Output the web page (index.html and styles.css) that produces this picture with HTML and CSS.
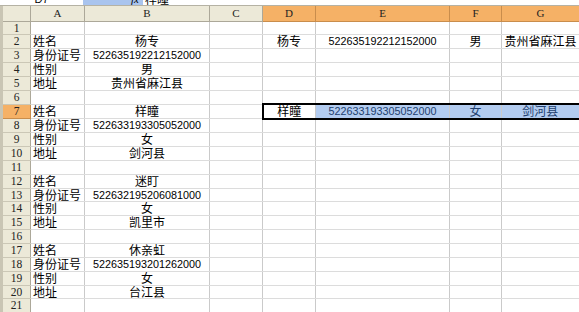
FILE: index.html
```html
<!DOCTYPE html>
<html lang="zh-CN">

<head>
  <meta charset="UTF-8" />
  <title>Sheet1</title>
  <link rel="stylesheet" href="styles.css">
</head>

<body>
  <div class="formula-bar">
    <div class="name-box"><span>D7</span></div>
    <div class="fx-box"><span>fx</span></div>
    <div class="formula-text"><span>样瞳</span></div>
  </div>

  <table class="sheet">
    <colgroup>
      <col class="w-head">
      <col class="w-a">
      <col class="w-b">
      <col class="w-c">
      <col class="w-d">
      <col class="w-e">
      <col class="w-f">
      <col class="w-g">
    </colgroup>
    <thead>
      <tr>
        <th class="corner"></th>
        <th>A</th>
        <th>B</th>
        <th>C</th>
        <th class="hl">D</th>
        <th class="hl">E</th>
        <th class="hl">F</th>
        <th class="hl">G</th>
      </tr>
    </thead>
    <tbody>
      <tr><th>1</th><td></td><td></td><td></td><td></td><td></td><td></td><td></td></tr>
      <tr><th>2</th><td class="l">姓名</td><td>杨专</td><td></td><td>杨专</td><td class="num">522635192212152000</td><td>男</td><td>贵州省麻江县</td></tr>
      <tr><th>3</th><td class="l">身份证号</td><td class="num">522635192212152000</td><td></td><td></td><td></td><td></td><td></td></tr>
      <tr><th>4</th><td class="l">性别</td><td>男</td><td></td><td></td><td></td><td></td><td></td></tr>
      <tr><th>5</th><td class="l">地址</td><td>贵州省麻江县</td><td></td><td></td><td></td><td></td><td></td></tr>
      <tr><th>6</th><td></td><td></td><td></td><td></td><td></td><td></td><td></td></tr>
      <tr><th class="hl">7</th><td class="l">姓名</td><td>样瞳</td><td></td><td class="sel sel-l">样瞳</td><td class="sel pick num">522633193305052000</td><td class="sel pick">女</td><td class="sel pick sel-r">剑河县</td></tr>
      <tr><th>8</th><td class="l">身份证号</td><td class="num">522633193305052000</td><td></td><td></td><td></td><td></td><td></td></tr>
      <tr><th>9</th><td class="l">性别</td><td>女</td><td></td><td></td><td></td><td></td><td></td></tr>
      <tr><th>10</th><td class="l">地址</td><td>剑河县</td><td></td><td></td><td></td><td></td><td></td></tr>
      <tr><th>11</th><td></td><td></td><td></td><td></td><td></td><td></td><td></td></tr>
      <tr><th>12</th><td class="l">姓名</td><td>迷盯</td><td></td><td></td><td></td><td></td><td></td></tr>
      <tr><th>13</th><td class="l">身份证号</td><td class="num">522632195206081000</td><td></td><td></td><td></td><td></td><td></td></tr>
      <tr><th>14</th><td class="l">性别</td><td>女</td><td></td><td></td><td></td><td></td><td></td></tr>
      <tr><th>15</th><td class="l">地址</td><td>凯里市</td><td></td><td></td><td></td><td></td><td></td></tr>
      <tr><th>16</th><td></td><td></td><td></td><td></td><td></td><td></td><td></td></tr>
      <tr><th>17</th><td class="l">姓名</td><td>休亲虹</td><td></td><td></td><td></td><td></td><td></td></tr>
      <tr><th>18</th><td class="l">身份证号</td><td class="num">522635193201262000</td><td></td><td></td><td></td><td></td><td></td></tr>
      <tr><th>19</th><td class="l">性别</td><td>女</td><td></td><td></td><td></td><td></td><td></td></tr>
      <tr><th>20</th><td class="l">地址</td><td>台江县</td><td></td><td></td><td></td><td></td><td></td></tr>
      <tr><th>21</th><td></td><td></td><td></td><td></td><td></td><td></td><td></td></tr>
    </tbody>
  </table>
</body>

</html>
```

FILE: styles.css
```css
* {
  box-sizing: border-box;
  margin: 0;
  padding: 0;
}

body {
  width: 100%;
  height: 100vh;
  background: #f4f4f4;
  font-family: "Noto Sans CJK SC", sans-serif;
  font-size: 12px;
  color: #000;
  overflow: hidden;
}

/* Barra de fórmula (só o rodapé aparece) */
.formula-bar {
  display: flex;
  align-items: flex-end;
  height: 6px;
  overflow: hidden;
  background: #fff;
  border-bottom: 1px solid #b5b2a4;
}

.name-box {
  width: 83px;
  text-align: center;
  font-family: "Liberation Sans", sans-serif;
  font-size: 11px;
  line-height: 12px;
}

.fx-box {
  width: 60px;
  padding-right: 4px;
  text-align: right;
  background: #a9c4ee;
  font-family: "Liberation Serif", serif;
  font-style: italic;
  font-size: 11px;
  line-height: 12px;
}

.formula-text {
  padding-left: 2px;
  line-height: 12px;
}

/* Planilha */
.sheet {
  width: 578px;
  table-layout: fixed;
  border-collapse: collapse;
  background: #fff;
}

.w-head { width: 29px; }
.w-a { width: 54px; }
.w-b { width: 125px; }
.w-c { width: 53px; }
.w-d { width: 53px; }
.w-e { width: 134px; }
.w-f { width: 52px; }
.w-g { width: 78px; }

.sheet th,
.sheet td {
  height: 13.85px;
  padding: 0;
  line-height: 12.85px;
  white-space: nowrap;
  font-weight: normal;
}

.sheet td {
  text-align: center;
  border-right: 1px solid #cacaca;
  border-bottom: 1px solid #dcdcdc;
}

.sheet td.l {
  text-align: left;
  padding-left: 2px;
}

.sheet td.num {
  font-family: "Liberation Sans", sans-serif;
  font-size: 10.8px;
}

.sheet thead th {
  height: 15px;
  background: #ece9d8;
  border-right: 1px solid #aca899;
  border-bottom: 1px solid #aca899;
  font-family: "Liberation Serif", serif;
  font-size: 11px;
  color: #222;
}

.sheet thead th.corner {
  border-left: 3px solid #c9c5b4;
}

.sheet tbody th {
  background: #ece9d8;
  border-left: 3px solid #c9c5b4;
  border-right: 1px solid #aca899;
  border-bottom: 1px solid #cbc7b6;
  font-family: "Liberation Serif", serif;
  font-size: 11.5px;
  color: #222;
}

.sheet th.hl {
  background: #f5b166;
  border-right-color: #c98d4c;
  border-bottom-color: #c98d4c;
}

/* Seleção D7:G7 */
.sheet td.sel {
  border-top: 2px solid #000;
  border-bottom: 2px solid #000;
}

.sheet td.sel-l {
  border-left: 2px solid #000;
}

.sheet td.sel-r {
  border-right: 2px solid #000;
}

.sheet td.pick {
  background: #b3ccf0;
  color: #22406e;
}
```
